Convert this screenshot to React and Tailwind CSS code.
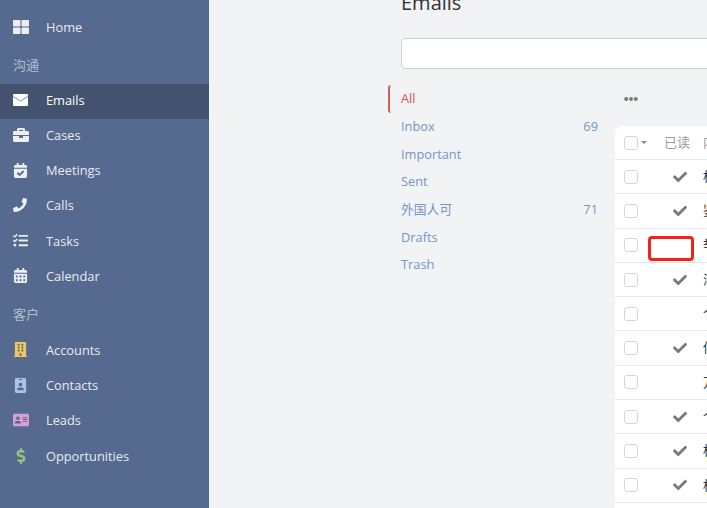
import React from 'react';
import {
  FaThLarge, FaBriefcase, FaCalendarCheck, FaPhone, FaTasks, FaCalendarAlt,
  FaBuilding, FaAddressCard, FaIdBadge, FaDollarSign, FaCheck, FaEllipsisH,
} from 'react-icons/fa';

const font = { fontFamily: '"Open Sans", "Noto Sans CJK SC", sans-serif' };

function MailIcon() {
  return (
    <svg width="15" height="12" viewBox="0 0 15 12">
      <rect width="15" height="12" rx="1" fill="#ffffff" />
      <path d="M0 2.5 L7.5 7 L15 2.5" fill="none" stroke="#7d8aa3" strokeWidth="1" />
    </svg>
  );
}

function NavItem({ icon: Icon, label, active, color = 'text-[#eceef2]', size = 'text-[15px]' }) {
  return (
    <div className={`flex h-[35.25px] items-center pb-[4px] pl-[13px] ${active ? 'bg-[#43526f] text-white' : 'text-[#e8ebf1]'}`}>
      <span className={`flex w-[33px] shrink-0 items-center ${size} ${color}`}>
        <Icon />
      </span>
      <span className="text-[12.8px] leading-[18px]">{label}</span>
    </div>
  );
}

function GroupLabel({ height, children }) {
  return <div className={`flex items-center pl-[13px] text-[13px] text-[#b4bdcc] ${height}`}>{children}</div>;
}

function Sidebar() {
  return (
    <aside className="flex h-full w-[209px] shrink-0 flex-col overflow-hidden bg-[#56698f] pt-[11px]">
      <NavItem icon={FaThLarge} label="Home" size="text-[16px]" />
      <GroupLabel height="h-[37.75px] pt-[2px]">沟通</GroupLabel>
      <NavItem icon={MailIcon} label="Emails" active />
      <NavItem icon={FaBriefcase} label="Cases" size="text-[16px]" />
      <NavItem icon={FaCalendarCheck} label="Meetings" />
      <NavItem icon={FaPhone} label="Calls" size="text-[14px]" />
      <NavItem icon={FaTasks} label="Tasks" />
      <NavItem icon={FaCalendarAlt} label="Calendar" />
      <GroupLabel height="h-[38.75px]">客户</GroupLabel>
      <NavItem icon={FaBuilding} label="Accounts" color="text-[#f0c75e]" />
      <NavItem icon={FaIdBadge} label="Contacts" color="text-[#a6c6e8]" />
      <NavItem icon={FaAddressCard} label="Leads" color="text-[#d8a0d0]" size="text-[16px]" />
      <NavItem icon={FaDollarSign} label="Opportunities" color="text-[#95c27c]" size="text-[16px]" />
    </aside>
  );
}

function Folder({ label, count, active }) {
  return (
    <div className={`flex h-[27.7px] items-center justify-between pr-[17px] text-[12.8px] ${active ? 'rounded-l-[3px] border-l-2 border-[#d65c5c] pl-[11px] font-medium text-[#d9534f]' : 'pl-[13px] text-[#7595c8]'}`}>
      <span>{label}</span>
      {count && <span>{count}</span>}
    </div>
  );
}

function Box() {
  return <span className="block h-[14px] w-[14px] shrink-0 rounded-[3px] border border-[#d4d6d8] bg-white" />;
}

const rows = [
  { read: true, ch: '标' },
  { read: true, ch: '鉴' },
  { read: false, ch: '举', marked: true },
  { read: true, ch: '海' },
  { read: false, ch: '个' },
  { read: true, ch: '傅' },
  { read: false, ch: '万' },
  { read: true, ch: '个' },
  { read: true, ch: '标' },
  { read: true, ch: '标' },
  { read: false, ch: '' },
];

function Row({ read, ch, marked }) {
  return (
    <div className="relative flex h-[34.3px] items-center border-t border-[#e6e7e8] pl-[9px]">
      <Box />
      <span className="flex w-[51px] shrink-0 justify-end pr-[2px]">
        {read && <FaCheck className="text-[14px] text-[#7c7878]" />}
      </span>
      <span className="ml-[14px] text-[13px] text-[#333]">{ch}</span>
      {marked && <div className="absolute left-[33px] top-[7px] h-[25px] w-[46px] rounded-[4px] border-[3px] border-[#f5221b]" />}
    </div>
  );
}

export default function App() {
  return (
    <div className="flex h-screen w-full overflow-hidden bg-[#f2f3f5]" style={font}>
      <Sidebar />
      <main className="flex-1 overflow-hidden pl-[192px]">
        <h1 className="-mt-[10px] h-[48px] text-[20px] leading-[26px] text-[#333]">Emails</h1>
        <div className="h-[31px] w-[400px] rounded-[4px] border border-[#ced1d1] bg-white" />
        <div className="flex pt-[16px]">
          <nav className="-ml-[13px] w-[227px] shrink-0">
            <Folder label="All" active />
            <Folder label="Inbox" count="69" />
            <Folder label="Important" />
            <Folder label="Sent" />
            <Folder label="外国人可" count="71" />
            <Folder label="Drafts" />
            <Folder label="Trash" />
          </nav>
          <section className="w-[300px] shrink-0">
            <div className="flex h-[28px] items-center pl-[9px] text-[14px] text-[#777]">
              <FaEllipsisH />
            </div>
            <div className="mt-[13px] rounded-tl-[8px] bg-white">
              <div className="flex h-[33px] items-center pl-[9px] text-[13px] text-[#9a9a9a]">
                <Box />
                <span className="ml-[3px] h-0 w-0 border-x-[3px] border-t-[3px] border-x-transparent border-t-[#888]" />
                <span className="ml-[17px] shrink-0">已读</span>
                <span className="ml-[13px] shrink-0">内容</span>
              </div>
              {rows.map((r, i) => <Row key={i} {...r} />)}
            </div>
          </section>
        </div>
      </main>
    </div>
  );
}
